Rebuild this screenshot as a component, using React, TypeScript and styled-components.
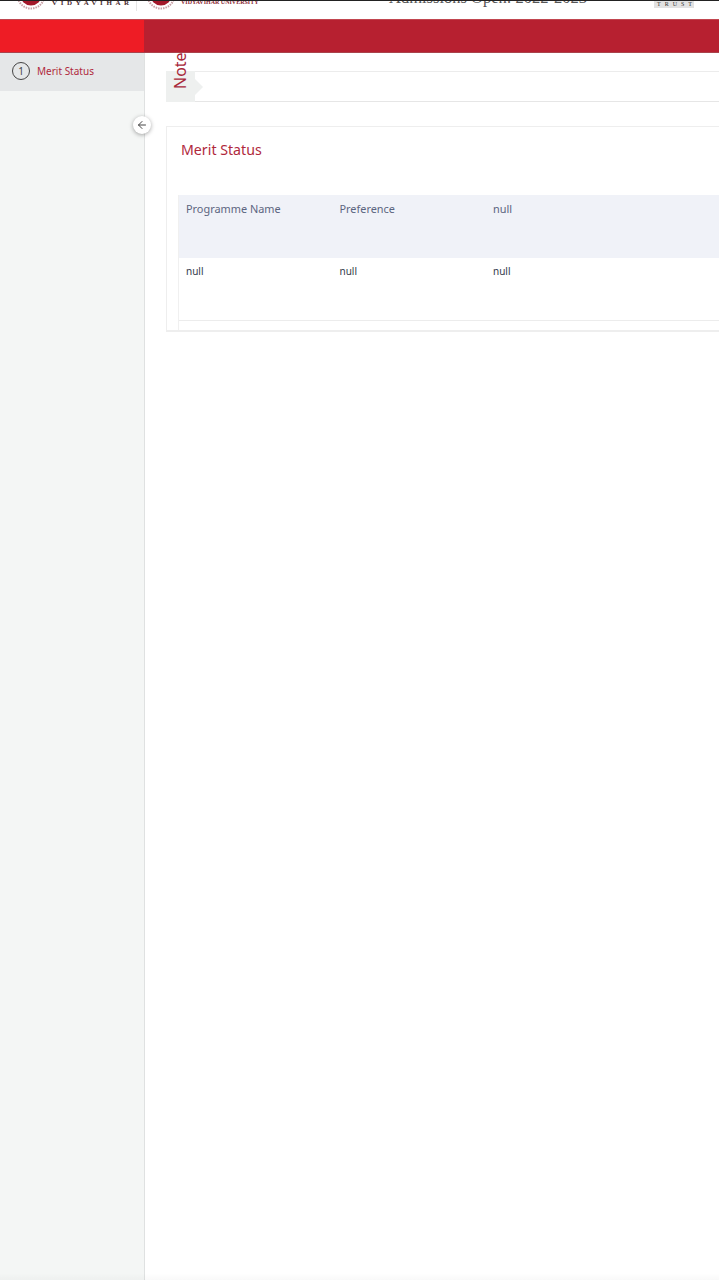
import React from 'react';
import styled, { createGlobalStyle } from 'styled-components';
import { ArrowLeft } from 'lucide-react';

const GlobalStyle = createGlobalStyle`
  html, body {
    margin: 0;
    padding: 0;
    background: #fff;
    overflow: hidden;
  }
  * { box-sizing: border-box; }
`;

const Page = styled.div`
  position: relative;
  width: 719px;
  height: 1280px;
  display: flex;
  flex-direction: column;
  overflow: hidden;
  font-family: 'Noto Sans', 'Open Sans', sans-serif;
  background: #fff;
`;

const TopBar = styled.header`
  position: relative;
  height: 19px;
  flex: none;
  overflow: hidden;
  background: #fff;
  border-top: 1px solid #222;
`;

const Crest = styled.svg<{ $left: number }>`
  position: absolute;
  left: ${(p) => p.$left}px;
  bottom: 9px;
  width: 30px;
  height: 30px;
`;

const BrandWide = styled.span`
  position: absolute;
  left: 52px;
  bottom: 12px;
  font-family: 'Liberation Serif', serif;
  font-size: 7px;
  font-weight: 700;
  letter-spacing: 3.6px;
  line-height: 8px;
  color: #4a2a2e;
  white-space: nowrap;
`;

const BrandSmall = styled.span`
  position: absolute;
  left: 181px;
  bottom: 13px;
  font-family: 'Liberation Serif', serif;
  font-size: 6px;
  font-weight: 700;
  line-height: 8px;
  color: #8c2a36;
  white-space: nowrap;
`;

const Divider = styled.div`
  position: absolute;
  left: 136px;
  top: 0;
  width: 1px;
  height: 10px;
  background: #e6e6e6;
`;

const Admissions = styled.div`
  position: absolute;
  left: 389px;
  top: -12px;
  font-family: 'Liberation Serif', serif;
  font-size: 16.5px;
  line-height: 18px;
  color: #555;
  white-space: nowrap;
`;

const TrustTag = styled.div`
  position: absolute;
  left: 654px;
  top: 0;
  width: 40px;
  height: 7px;
  padding-left: 3px;
  background: #e2e2e2;
  color: #333;
  font-family: 'Liberation Serif', serif;
  font-size: 6px;
  line-height: 7px;
  letter-spacing: 4px;
  text-align: center;
`;

const RedBar = styled.div`
  height: 34px;
  flex: none;
  display: flex;
  background: #b72030;
  border-top: 1px solid #c24650;
  border-bottom: 1px solid #a9434c;
`;

const RedAccent = styled.div`
  width: 144px;
  background: #ee1c25;
`;

const Body = styled.div`
  flex: 1;
  display: flex;
  min-height: 0;
`;

const Sidebar = styled.aside`
  position: relative;
  width: 145px;
  flex: none;
  background: #f4f6f5;
  border-right: 1px solid #dfe1e1;
`;

const SideItem = styled.div`
  height: 38px;
  display: flex;
  align-items: center;
  gap: 7px;
  padding: 0 0 2px 12px;
  background: #e5e7e8;
  color: #b0283c;
  font-size: 10px;
`;

const StepCircle = styled.span`
  width: 18px;
  height: 18px;
  border-radius: 50%;
  border: 1px solid #444;
  color: #444;
  display: flex;
  align-items: center;
  justify-content: center;
  font-size: 10px;
`;

const CollapseButton = styled.button`
  position: absolute;
  top: 63px;
  right: -7px;
  width: 18px;
  height: 18px;
  padding: 0;
  border: none;
  border-radius: 50%;
  background: #fff;
  box-shadow: 0 1px 4px rgba(0, 0, 0, 0.35);
  color: #444;
  display: flex;
  align-items: center;
  justify-content: center;
`;

const Main = styled.main`
  flex: 1;
  min-width: 0;
  overflow: hidden;
  padding: 18px 0 0 21px;
`;

const NoteBar = styled.section`
  position: relative;
  width: 640px;
  height: 31px;
  border-top: 1px solid #ececec;
  border-bottom: 1px solid #e6e6e6;
`;

const NoteTab = styled.div`
  position: absolute;
  left: 0;
  top: -1px;
  width: 29px;
  height: 31px;
  background: #eef0ef;

  &::after {
    content: '';
    position: absolute;
    left: 29px;
    top: 8px;
    border-style: solid;
    border-width: 8px 0 8px 8px;
    border-color: transparent transparent transparent #eef0ef;
  }
`;

const NoteLabel = styled.span`
  position: absolute;
  left: 6px;
  top: -19px;
  height: 38px;
  width: 17px;
  display: flex;
  align-items: center;
  justify-content: center;
  writing-mode: vertical-rl;
  transform: rotate(180deg);
  font-size: 16px;
  line-height: 17px;
  color: #a8283a;
  white-space: nowrap;
`;

const Card = styled.section`
  margin-top: 24px;
  width: 640px;
  height: 206px;
  padding: 0 0 0 11px;
  border: 1px solid #eeeeee;
  border-bottom-width: 2px;
`;

const CardTitle = styled.h2`
  margin: 13px 0 35px 3px;
  height: 20px;
  font-size: 14.2px;
  line-height: 20px;
  font-weight: 400;
  color: #b0283c;
`;

const Table = styled.div`
  border-left: 1px solid #f0f0f0;
  padding-bottom: 9px;
`;

const Row = styled.div<{ $head?: boolean }>`
  display: grid;
  grid-template-columns: repeat(4, 153.5px);
  height: 63px;
  padding: ${(p) => (p.$head ? '6px' : '5px')} 0 0 7px;
  background: ${(p) => (p.$head ? '#f0f2f8' : '#fff')};
  border-bottom: ${(p) => (p.$head ? 'none' : '1px solid #ececec')};
  color: ${(p) => (p.$head ? '#5c6580' : '#333a4a')};
  font-size: ${(p) => (p.$head ? '10.9px' : '10px')};
  line-height: 16px;
`;

const BottomFade = styled.div`
  position: absolute;
  left: 0;
  right: 0;
  bottom: 0;
  height: 7px;
  background: linear-gradient(to bottom, rgba(0, 0, 0, 0), rgba(0, 0, 0, 0.025));
  pointer-events: none;
`;

const CrestMark = ({ left }: { left: number }) => (
  <Crest $left={left} viewBox="0 0 30 30">
    <circle cx="15" cy="15" r="13.5" fill="#fff" stroke="#c9a0a6" strokeWidth="2" strokeDasharray="1.5 1" />
    <circle cx="15" cy="15" r="10.5" fill="#a3182a" />
  </Crest>
);

const App: React.FC = () => {
  const headers = ['Programme Name', 'Preference', 'null'];
  const cells = ['null', 'null', 'null'];

  return (
    <Page>
      <GlobalStyle />
      <TopBar>
        <CrestMark left={16} />
        <BrandWide>VIDYAVIHAR</BrandWide>
        <Divider />
        <CrestMark left={146} />
        <BrandSmall>VIDYAVIHAR UNIVERSITY</BrandSmall>
        <Admissions>Admissions Open: 2022-2023</Admissions>
        <TrustTag>TRUST</TrustTag>
      </TopBar>
      <RedBar>
        <RedAccent />
      </RedBar>
      <Body>
        <Sidebar>
          <SideItem>
            <StepCircle>1</StepCircle>
            Merit Status
          </SideItem>
          <CollapseButton aria-label="Collapse">
            <ArrowLeft size={12} strokeWidth={2} />
          </CollapseButton>
        </Sidebar>
        <Main>
          <NoteBar>
            <NoteTab>
              <NoteLabel>Note</NoteLabel>
            </NoteTab>
          </NoteBar>
          <Card>
            <CardTitle>Merit Status</CardTitle>
            <Table>
              <Row $head>
                {headers.map((h, i) => (
                  <div key={i}>{h}</div>
                ))}
              </Row>
              <Row>
                {cells.map((c, i) => (
                  <div key={i}>{c}</div>
                ))}
              </Row>
            </Table>
          </Card>
        </Main>
      </Body>
      <BottomFade />
    </Page>
  );
};

export default App;
